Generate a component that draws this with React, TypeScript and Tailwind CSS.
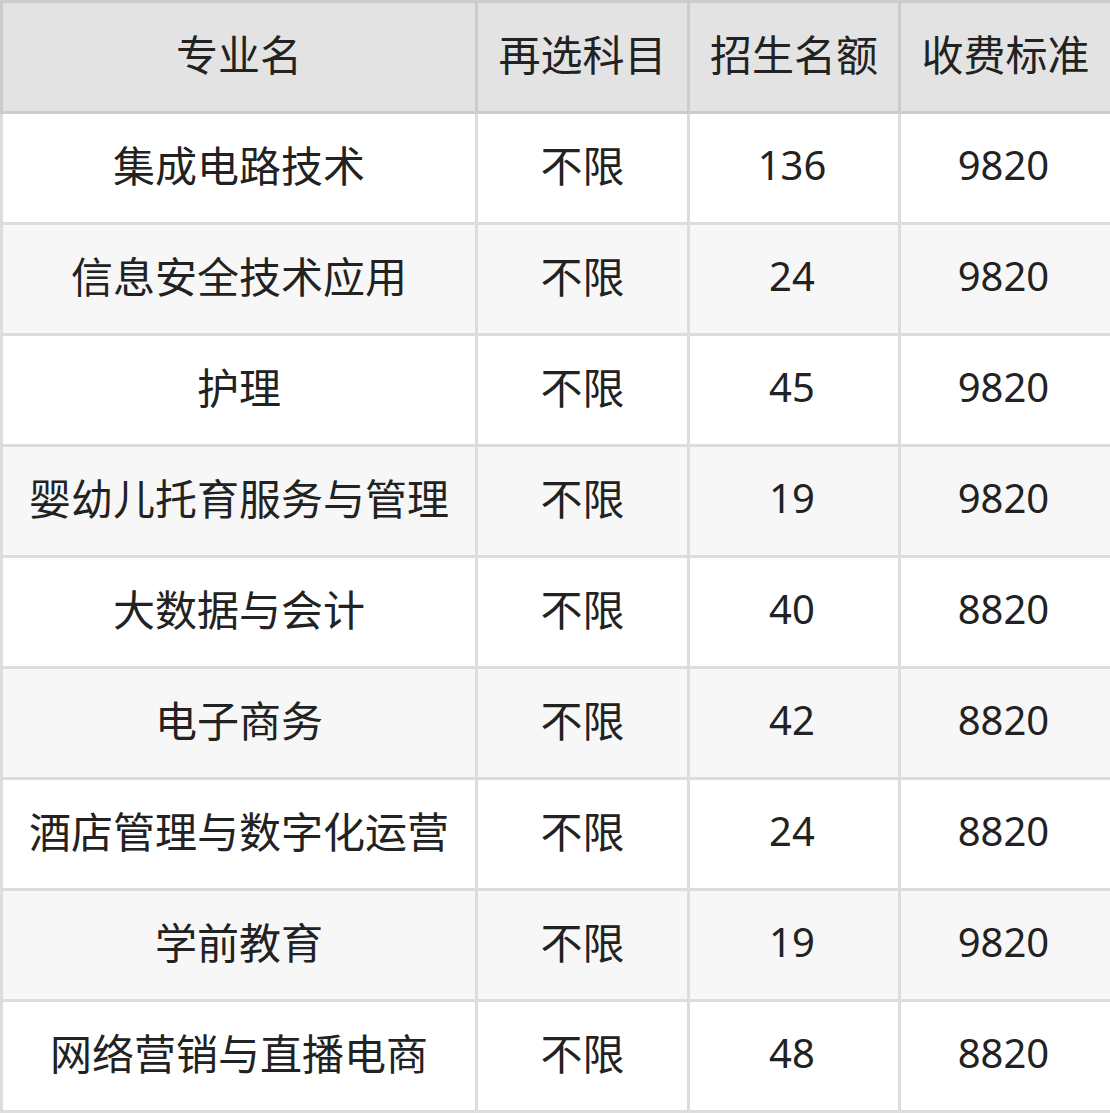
import React from "react";

const rows: [string, string, string, string][] = [
  ["集成电路技术", "不限", "136", "9820"],
  ["信息安全技术应用", "不限", "24", "9820"],
  ["护理", "不限", "45", "9820"],
  ["婴幼儿托育服务与管理", "不限", "19", "9820"],
  ["大数据与会计", "不限", "40", "8820"],
  ["电子商务", "不限", "42", "8820"],
  ["酒店管理与数字化运营", "不限", "24", "8820"],
  ["学前教育", "不限", "19", "9820"],
  ["网络营销与直播电商", "不限", "48", "8820"],
];

const headers = ["专业名", "再选科目", "招生名额", "收费标准"];
const widths = ["w-[475px]", "w-[212px]", "w-[211px]", "w-[212px]"];

export default function App() {
  return (
    <div
      className="w-[1110px] bg-white"
      style={{ fontFamily: '"Noto Sans", "Noto Sans CJK SC", sans-serif' }}
    >
      <table className="w-[1110px] border-collapse table-fixed text-[#222222]">
        <thead>
          <tr className="h-[111px] bg-[#e3e3e3]">
            {headers.map((h, i) => (
              <th
                key={h}
                className={`${widths[i]} border-[3px] border-[#cccccc] text-center font-normal text-[42px] p-0 pb-[6px]`}
              >
                {h}
              </th>
            ))}
          </tr>
        </thead>
        <tbody>
          {rows.map((r, ri) => (
            <tr
              key={ri}
              className={`h-[111px] ${ri % 2 === 1 ? "bg-[#f7f7f7]" : "bg-white"}`}
            >
              {r.map((c, ci) => (
                <td
                  key={ci}
                  className={`border-[3px] border-[#dddddd] text-center p-0 pb-[6px] whitespace-nowrap ${
                    ci < 2 ? "text-[42px]" : "text-[40px] pr-[4px]"
                  }`}
                >
                  {c}
                </td>
              ))}
            </tr>
          ))}
        </tbody>
      </table>
    </div>
  );
}
